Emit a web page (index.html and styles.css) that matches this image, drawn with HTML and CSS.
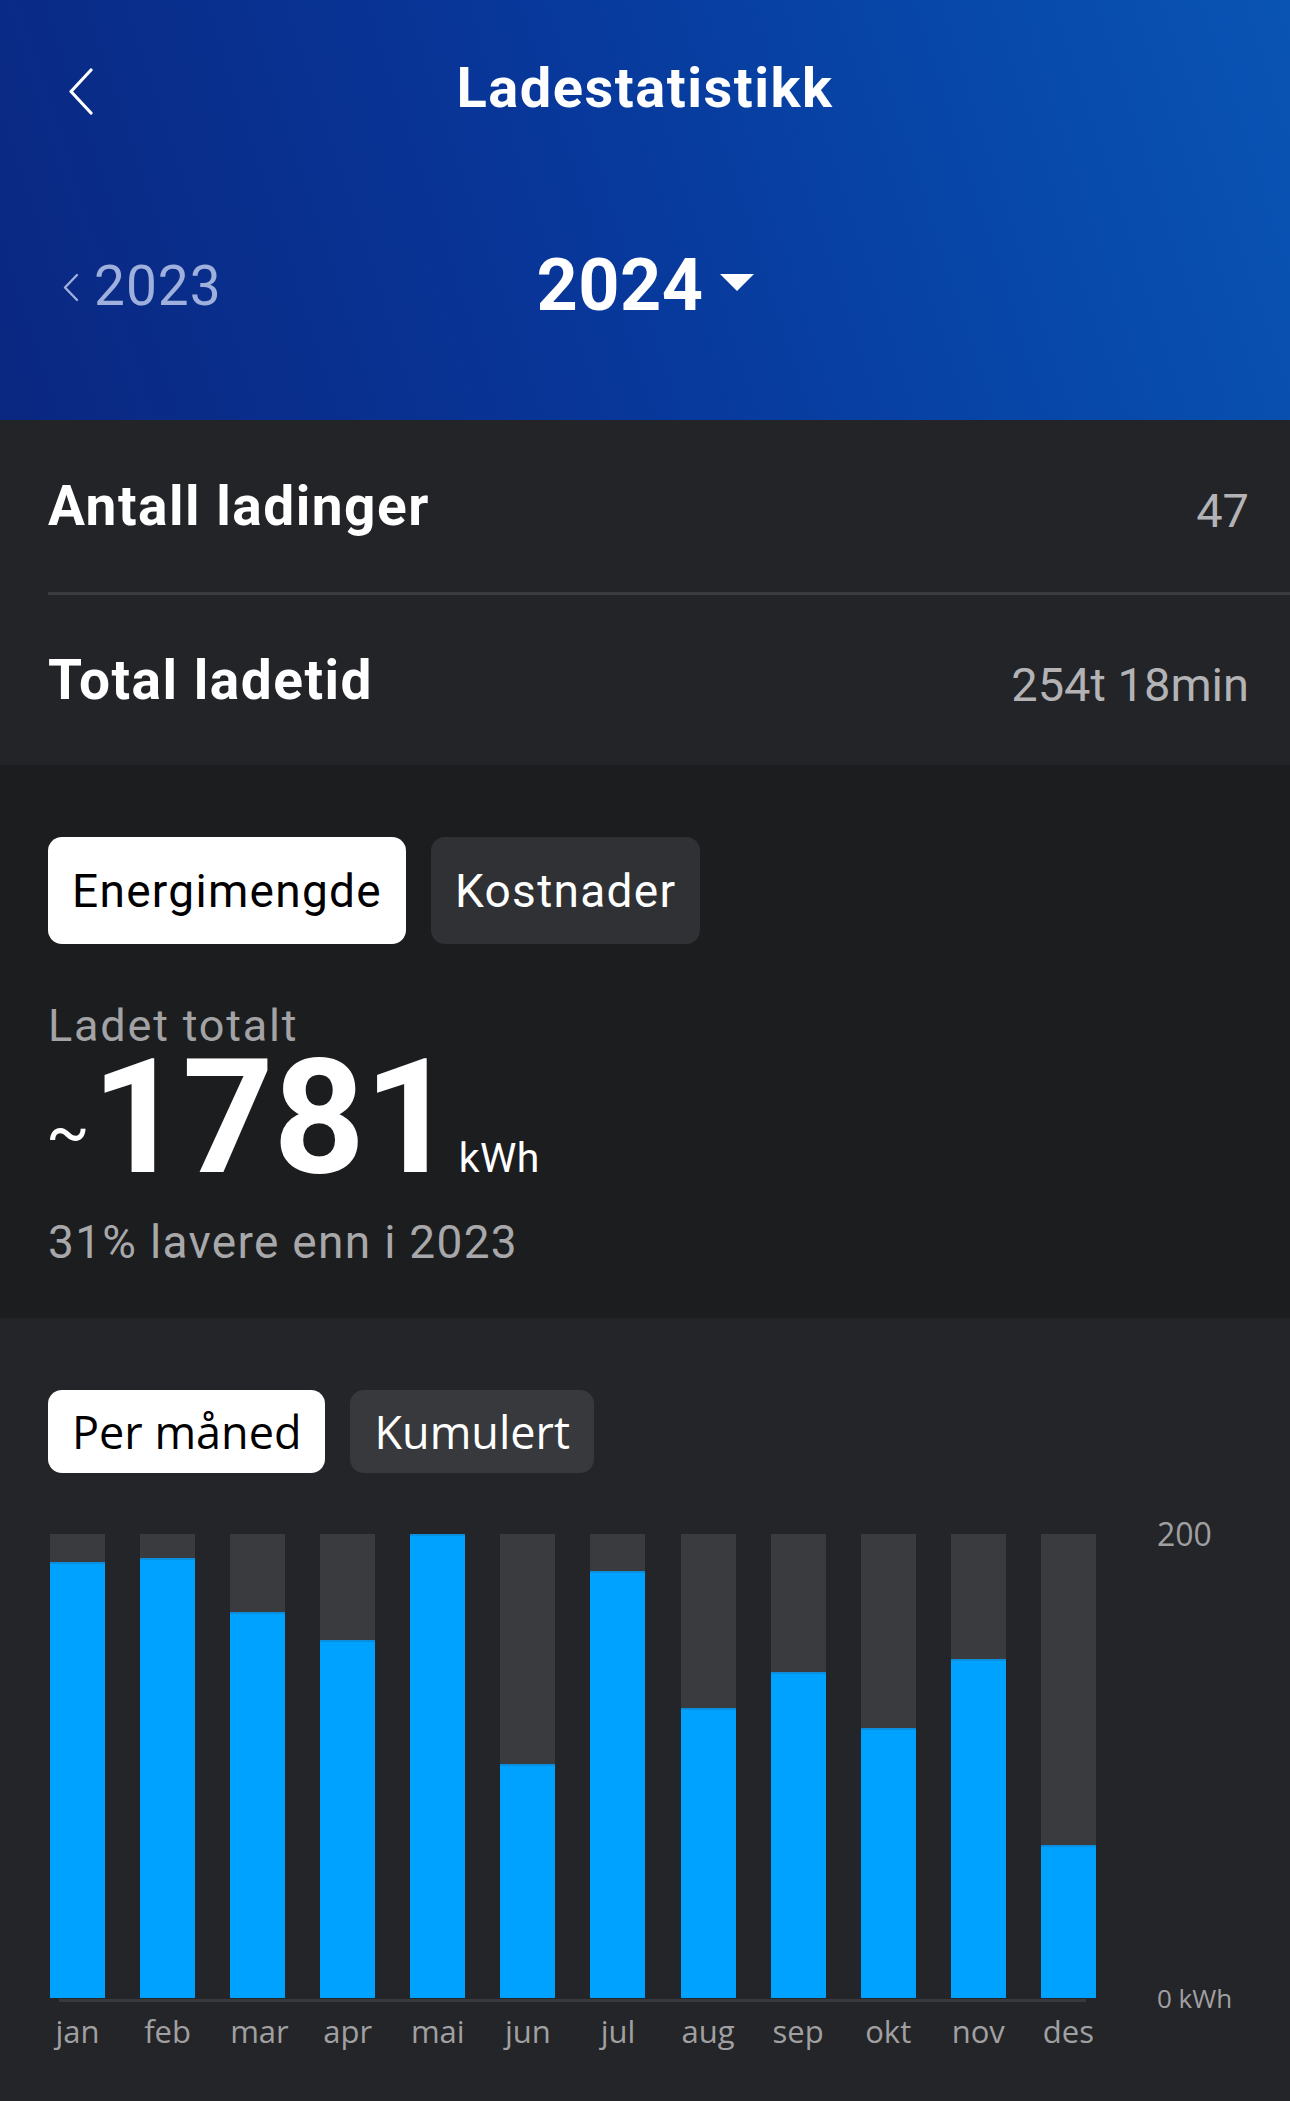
FILE: index.html
```html
<!DOCTYPE html>
<html lang="no">
<head>
<meta charset="utf-8">
<title>Ladestatistikk</title>
<link rel="stylesheet" href="styles.css">
</head>
<body>
<div class="app">
  <header class="hero">
    <div class="topbar">
      <div class="topbar-side">
        <svg class="back" width="26" height="47" viewBox="0 0 26 47" aria-hidden="true"><path d="M23 2 L3 23.5 L23 45" fill="none" stroke="#fff" stroke-width="3.2" stroke-linecap="round" stroke-linejoin="round"/></svg>
      </div>
      <h1 class="title">Ladestatistikk</h1>
      <div class="topbar-side"></div>
    </div>
    <div class="years">
      <div class="prev-year">
        <svg class="prev-chev" width="17" height="29" viewBox="0 0 17 29" aria-hidden="true"><path d="M15 2 L3 14.5 L15 27" fill="none" stroke="#9fb0dc" stroke-width="2.4" stroke-linecap="round" stroke-linejoin="round"/></svg>
        <span>2023</span>
      </div>
      <div class="cur-year">
        <span>2024</span>
        <svg class="caret" width="34" height="17" viewBox="0 0 34 17" aria-hidden="true"><path d="M0 0 H34 L17 17 Z" fill="#fff"/></svg>
      </div>
      <div></div>
    </div>
  </header>

  <section class="stats">
    <div class="stat-row">
      <span class="stat-label">Antall ladinger</span>
      <span class="stat-value">47</span>
    </div>
    <div class="stat-row">
      <span class="stat-label">Total ladetid</span>
      <span class="stat-value">254t 18min</span>
    </div>
  </section>

  <section class="energy">
    <div class="seg seg-lg">
      <button class="seg-btn is-active">Energimengde</button>
      <button class="seg-btn">Kostnader</button>
    </div>
    <div class="total-label">Ladet totalt</div>
    <div class="total-value"><span class="tilde">~</span>1781<span class="unit">kWh</span></div>
    <div class="total-compare">31% lavere enn i 2023</div>
  </section>

  <section class="chart-section">
    <div class="seg seg-sm">
      <button class="seg-btn2 is-active">Per måned</button>
      <button class="seg-btn2">Kumulert</button>
    </div>
    <div class="chart">
      <div class="plot">
        <div class="bars">
          <div class="bar"><div class="fill" style="height:94.0%"></div></div>
          <div class="bar"><div class="fill" style="height:94.8%"></div></div>
          <div class="bar"><div class="fill" style="height:83.2%"></div></div>
          <div class="bar"><div class="fill" style="height:77.2%"></div></div>
          <div class="bar"><div class="fill" style="height:100%"></div></div>
          <div class="bar"><div class="fill" style="height:50.4%"></div></div>
          <div class="bar"><div class="fill" style="height:92.0%"></div></div>
          <div class="bar"><div class="fill" style="height:62.5%"></div></div>
          <div class="bar"><div class="fill" style="height:70.3%"></div></div>
          <div class="bar"><div class="fill" style="height:58.2%"></div></div>
          <div class="bar"><div class="fill" style="height:73.1%"></div></div>
          <div class="bar"><div class="fill" style="height:33.0%"></div></div>
        </div>
        <div class="axis-line"></div>
        <div class="months">
          <span>jan</span><span>feb</span><span>mar</span><span>apr</span><span>mai</span><span>jun</span>
          <span>jul</span><span>aug</span><span>sep</span><span>okt</span><span>nov</span><span>des</span>
        </div>
      </div>
      <div class="yaxis">
        <span class="tick tick-top">200</span>
        <span class="tick tick-bottom">0 kWh</span>
      </div>
    </div>
  </section>
</div>
</body>
</html>
```

FILE: styles.css
```css
* { box-sizing: border-box; }
html, body { margin: 0; padding: 0; }
body {
  background: #242528;
  font-family: Roboto, "Noto Sans", "Liberation Sans", sans-serif;
  color: #fff;
  width: 1290px;
  min-height: 2101px;
}
.app { width: 1290px; }

/* Header */
.hero {
  height: 420px;
  padding-top: 60px;
  background: linear-gradient(72deg, #0a2781 0%, #08379a 45%, #074aac 80%, #0a54b4 100%);
}
.topbar {
  display: grid;
  grid-template-columns: 1fr auto 1fr;
  align-items: center;
  height: 56px;
}
.topbar-side { display: flex; align-items: center; }
.back { margin-left: 68px; margin-top: 6px; display: block; }
.title {
  margin: 0;
  font-size: 56px;
  line-height: 56px;
  font-weight: 700;
  letter-spacing: 1.5px;
}
.years {
  margin-top: 134px;
  height: 72px;
  display: grid;
  grid-template-columns: 1fr auto 1fr;
  align-items: center;
}
.prev-year {
  display: flex;
  align-items: center;
  gap: 15px;
  padding-left: 62px;
  color: #9fb0dc;
  font-size: 55px;
  line-height: 55px;
  letter-spacing: 1px;
}
.prev-chev { display: block; margin-top: 2px; }
.cur-year {
  display: flex;
  align-items: center;
  gap: 16px;
  font-size: 72px;
  line-height: 72px;
  font-weight: 700;
  letter-spacing: 0.5px;
}
.caret { display: block; margin-top: -8px; }

/* Stats */
.stats {
  background: #232427;
  padding-left: 48px;
}
.stat-row {
  height: 172px;
  display: flex;
  align-items: center;
  justify-content: space-between;
  padding-right: 41px;
}
.stat-row + .stat-row {
  border-top: 3px solid #3a3b3e;
  height: 173px;
}
.stat-label {
  font-size: 55px;
  line-height: 55px;
  font-weight: 700;
  letter-spacing: 1.5px;
}
.stat-value {
  margin-top: 8px;
  font-size: 47px;
  line-height: 47px;
  color: #b3b3b5;
  letter-spacing: 0;
}

/* Energy */
.energy {
  background: #1c1d1f;
  padding: 72px 48px 53px;
}
.seg { display: flex; gap: 25px; }
.seg-btn {
  height: 107px;
  padding: 0 24px;
  border: 0;
  border-radius: 14px;
  background: #303134;
  color: #fff;
  font-family: Roboto, "Noto Sans", sans-serif;
  font-size: 46px;
  letter-spacing: 1.3px;
}
.seg-btn.is-active { background: #fff; color: #000; }
.total-label {
  margin-top: 59px;
  font-size: 45px;
  line-height: 45px;
  color: #a3a3a5;
  letter-spacing: 1.8px;
}
.total-value {
  margin-top: 10px;
  font-size: 160px;
  line-height: 120px;
  font-weight: 700;
  letter-spacing: -1px;
}
.tilde {
  font-size: 64px;
  line-height: 1;
  font-weight: 400;
  letter-spacing: 0;
  vertical-align: 18px;
  margin-left: -2px;
  margin-right: 2px;
}
.unit {
  font-size: 41px;
  line-height: 1;
  font-weight: 400;
  letter-spacing: 0.5px;
  margin-left: 4px;
}
.total-compare {
  margin-top: 40px;
  font-size: 46px;
  line-height: 46px;
  color: #a8a8aa;
  letter-spacing: 1.3px;
}

/* Chart */
.chart-section {
  background: #242528;
  padding: 72px 0 0 48px;
  min-height: 784px;
}
.seg-btn2 {
  height: 83px;
  padding: 0 24px;
  border: 0;
  border-radius: 14px;
  background: #38393c;
  color: #fff;
  font-family: "Open Sans", "DejaVu Sans", sans-serif;
  font-size: 45px;
}
.seg-btn2.is-active { background: #fff; color: #000; }
.chart {
  margin-top: 61px;
  margin-left: 2px;
  display: flex;
}
.plot { width: 1046px; }
.bars {
  height: 464px;
  display: flex;
  justify-content: space-between;
}
.bar {
  width: 55px;
  background: #3a3b3e;
  display: flex;
  flex-direction: column;
  justify-content: flex-end;
}
.fill {
  background: #00a2ff;
  border-top: 2px solid #0a8fe0;
}
.axis-line {
  height: 3px;
  margin: 1px 10px 0 9px;
  background: #38393c;
}
.months {
  margin-top: 14px;
  display: flex;
  justify-content: space-between;
}
.months span {
  width: 55px;
  text-align: center;
  font-family: "Open Sans", "DejaVu Sans", sans-serif;
  font-size: 31px;
  line-height: 31px;
  color: #a0a0a2;
  white-space: nowrap;
}
.yaxis {
  position: relative;
  height: 464px;
  margin-left: 61px;
  flex: 1;
}
.tick {
  position: absolute;
  left: 0;
  font-family: "Open Sans", "DejaVu Sans", sans-serif;
  color: #a0a0a2;
  line-height: 1;
  white-space: nowrap;
}
.tick-top { top: 0; font-size: 32px; transform: translateY(-50%); }
.tick-bottom { bottom: 0; font-size: 26px; transform: translateY(50%); }
```
